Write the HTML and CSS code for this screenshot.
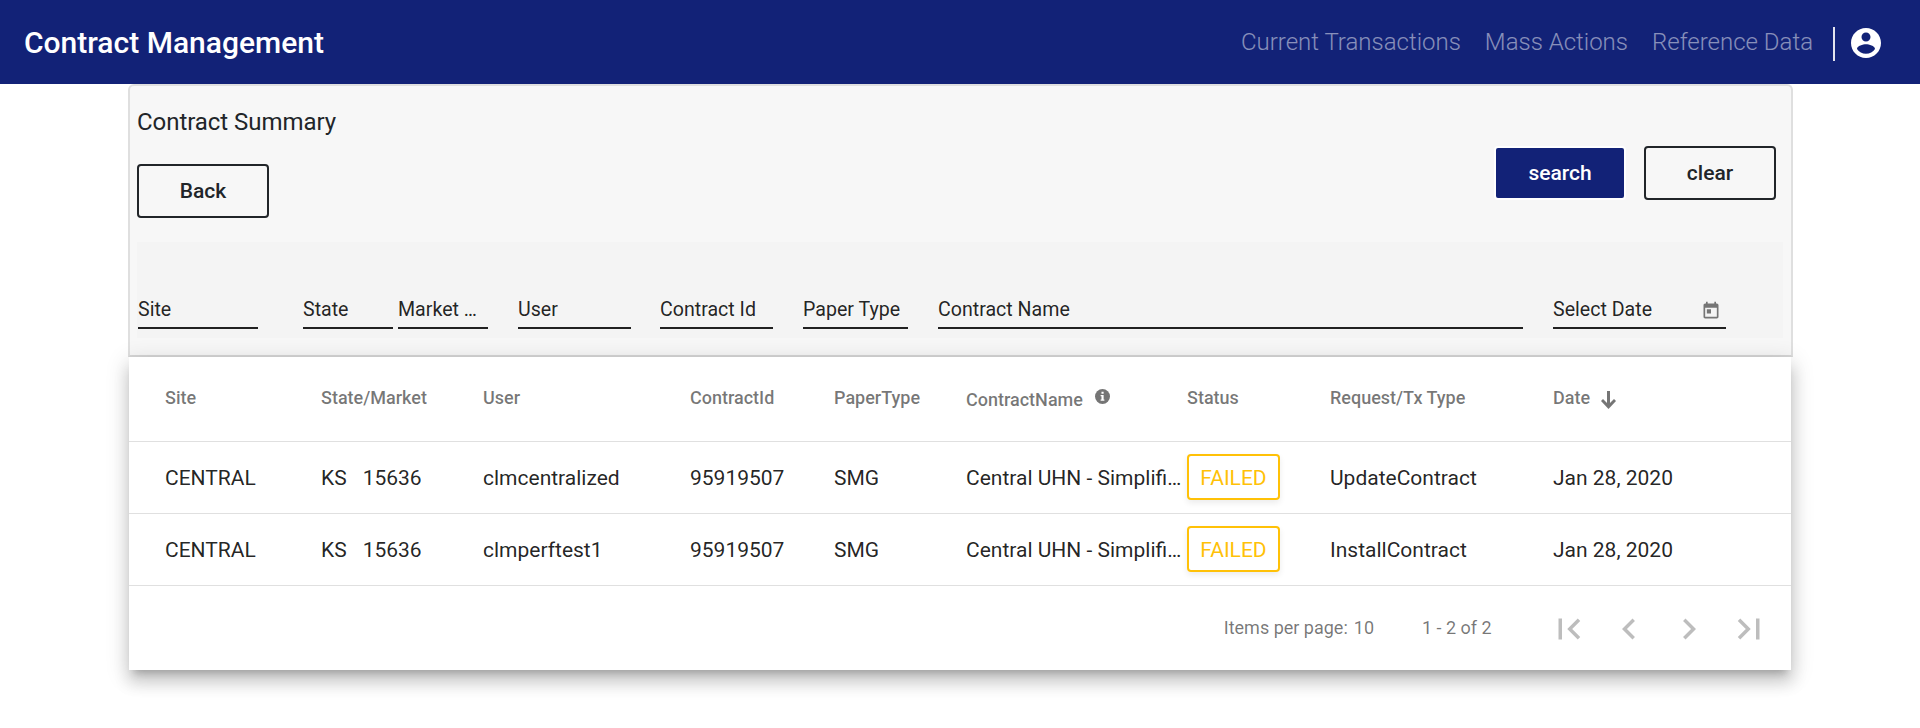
FILE: index.html
```html
<!DOCTYPE html>
<html lang="en">
<head>
<meta charset="utf-8">
<title>Contract Management</title>
<link rel="stylesheet" href="styles.css">
</head>
<body>
<header class="topbar">
  <h1 class="brand">Contract Management</h1>
  <nav class="nav">
    <a class="nav-link">Current Transactions</a>
    <a class="nav-link">Mass Actions</a>
    <a class="nav-link">Reference Data</a>
    <span class="nav-divider"></span>
    <svg class="account" viewBox="0 0 24 24"><path d="M12 2C6.48 2 2 6.48 2 12s4.48 10 10 10 10-4.48 10-10S17.52 2 12 2zm0 3c1.66 0 3 1.34 3 3s-1.34 3-3 3-3-1.34-3-3 1.34-3 3-3zm0 14.2c-2.5 0-4.71-1.28-6-3.22.03-1.99 4-3.08 6-3.08 1.99 0 5.97 1.09 6 3.08-1.29 1.94-3.5 3.22-6 3.22z"/></svg>
  </nav>
</header>
<main class="container">
  <section class="card">
    <div class="card-head">
      <div>
        <h2 class="card-title">Contract Summary</h2>
        <button class="btn btn-outline">Back</button>
      </div>
      <div class="actions">
        <button class="btn btn-primary">search</button>
        <button class="btn btn-outline">clear</button>
      </div>
    </div>
    <div class="filters">
      <div class="field field-site">Site</div>
      <div class="field field-state">State</div>
      <div class="field field-market">Market …</div>
      <div class="field field-user">User</div>
      <div class="field field-id">Contract Id</div>
      <div class="field field-paper">Paper Type</div>
      <div class="field field-name">Contract Name</div>
      <div class="field field-date">Select Date
        <svg class="calendar" viewBox="0 0 24 24"><path d="M19 3h-1V1h-2v2H8V1H6v2H5c-1.11 0-1.99.9-1.99 2L3 19c0 1.1.89 2 2 2h14c1.1 0 2-.9 2-2V5c0-1.1-.9-2-2-2zm0 16H5V8h14v11zM7 10h5v5H7z"/></svg>
      </div>
    </div>
  </section>
  <section class="table">
    <div class="row row-head">
      <span>Site</span><span>State/Market</span><span>User</span><span>ContractId</span><span>PaperType</span>
      <span class="head-name">ContractName <svg class="info" viewBox="0 0 16 16"><circle cx="8" cy="8" r="8"/><path class="info-mark" d="M6.9 3h2.3v2H6.9zM6 6.3h3.2v4.8H10v1.3H6v-1.3h.9V7.6H6z"/></svg></span>
      <span>Status</span><span>Request/Tx Type</span>
      <span class="head-date">Date <svg class="arrow" viewBox="0 0 15 18"><path d="M6 0h3v12l4-4 2 2-7.5 8L0 10l2-2 4 4z"/></svg></span>
    </div>
    <div class="row">
      <span>CENTRAL</span><span class="market"><span>KS</span><span>15636</span></span><span>clmcentralized</span><span>95919507</span><span>SMG</span><span>Central UHN - Simplifi…</span><span class="badge">FAILED</span><span>UpdateContract</span><span>Jan 28, 2020</span>
    </div>
    <div class="row">
      <span>CENTRAL</span><span class="market"><span>KS</span><span>15636</span></span><span>clmperftest1</span><span>95919507</span><span>SMG</span><span>Central UHN - Simplifi…</span><span class="badge">FAILED</span><span>InstallContract</span><span>Jan 28, 2020</span>
    </div>
    <div class="paginator">
      <span class="page-label">Items per page:</span>
      <span class="page-size">10</span>
      <span class="page-range">1 - 2 of 2</span>
      <span class="page-btn"><svg viewBox="0 0 24 24"><path d="M18.41 16.59L13.82 12l4.59-4.59L17 6l-6 6 6 6zM6 6h2v12H6z"/></svg></span>
      <span class="page-btn"><svg viewBox="0 0 24 24"><path d="M15.41 7.41L14 6l-6 6 6 6 1.41-1.41L10.83 12z"/></svg></span>
      <span class="page-btn"><svg viewBox="0 0 24 24"><path d="M10 6L8.59 7.41 13.17 12l-4.58 4.59L10 18l6-6z"/></svg></span>
      <span class="page-btn"><svg viewBox="0 0 24 24"><path d="M5.59 7.41L10.18 12l-4.59 4.59L7 18l6-6-6-6zM16 6h2v12h-2z"/></svg></span>
    </div>
  </section>
</main>
</body>
</html>
```
FILE: styles.css
```css
* { box-sizing: border-box; }
body { margin: 0; min-height: 728px; background: #fff; color: #212529; font-family: Roboto, "Liberation Sans", sans-serif; }
h1, h2 { margin: 0; }
svg { display: block; flex: none; }

.topbar { height: 84px; background: #122277; display: flex; justify-content: space-between; align-items: center; padding: 0 36px 0 24px; }
.brand { font-size: 30px; font-weight: 500; line-height: 36px; color: #fff; margin-top: 2px; }
.nav { display: flex; align-items: center; }
.nav-link { font-size: 24px; font-weight: 300; line-height: 36px; color: rgba(255, 255, 255, .5); margin-right: 24px; white-space: nowrap; }
.nav-divider { width: 2px; height: 34px; margin: 3px 13px 0 -4px; background: #e3e4ee; }
.account { width: 36px; height: 36px; fill: #fff; margin-top: 2px; }

.container { width: 1665px; margin-left: 128px; }
.card { height: 273px; background: #f7f7f7; border: 2px solid #dfdfdf; border-bottom-color: #d6d6d6; border-radius: 6px 6px 0 0; padding: 0 8px 0 7px; }
.card-head { height: 156px; display: flex; justify-content: space-between; }
.card-title { font-size: 24px; font-weight: 400; line-height: 36px; letter-spacing: -.05px; margin: 18px 0 24px; }
.btn { display: block; width: 132px; height: 54px; border-radius: 4px; font: 500 21px/50px Roboto, "Liberation Sans", sans-serif; padding: 0; text-align: center; }
.btn-outline { background: transparent; border: 2px solid #212529; color: #212529; }
.btn-primary { background: #122277; border: 2px solid #fff; color: #fff; }
.actions { display: flex; gap: 18px; margin: 60px 7px 0 0; }

.filters { height: 96px; background: #f4f4f4; padding: 51px 0 0 1px; display: flex; }
.field { height: 36px; border-bottom: 2px solid #212121; color: rgba(0, 0, 0, .87); font-size: 19.6px; line-height: 34px; white-space: nowrap; flex: none; }
.field-site { width: 120px; margin-right: 45px; }
.field-state { width: 90px; margin-right: 5px; }
.field-market { width: 90px; margin-right: 30px; }
.field-user { width: 113px; margin-right: 29px; }
.field-id { width: 113px; margin-right: 30px; }
.field-paper { width: 105px; margin-right: 30px; }
.field-name { width: 585px; margin-right: 30px; }
.field-date { width: 173px; display: flex; justify-content: space-between; padding-right: 5px; }
.calendar { width: 20px; height: 20px; margin-top: 8px; fill: #757575; }

.table { position: relative; width: 1662px; height: 313px; margin-left: 1px; background: #fff;
  box-shadow: 0 7.5px 7.5px -4.5px rgba(0, 0, 0, .2), 0 12px 15px 1.5px rgba(0, 0, 0, .14), 0 4.5px 21px 3px rgba(0, 0, 0, .12); }
.row { height: 72px; padding: 0 0 0 36px; border-bottom: 1px solid #e0e0e0; display: grid; align-items: center;
  grid-template-columns: 156px 162px 207px 144px 132px 221px 143px 223px 1fr; font-size: 21px; color: rgba(0, 0, 0, .87); white-space: nowrap; }
.row-head { height: 85px; padding-bottom: 4px; font-size: 18px; font-weight: 500; color: rgba(0, 0, 0, .54); }
.head-name, .head-date { display: flex; align-items: center; }
.head-name { padding-top: 5px; }
.info { width: 15px; height: 15px; margin: -7px 0 0 12px; fill: #757575; }
.info-mark { fill: #fff; }
.arrow { width: 15px; height: 18px; margin: 4px 0 -2px 11px; fill: #757575; }
.market { display: flex; gap: 16px; }
.badge { width: 93px; height: 46px; margin-bottom: 1px; border: 2px solid #ffc107; border-radius: 4px; color: #ffc107; line-height: 44px; text-align: center; box-shadow: 0 3px 6px rgba(0, 0, 0, .08); }

.paginator { height: 84px; display: flex; align-items: center; justify-content: flex-end; padding: 0 12px 2px 0; font-size: 18px; color: rgba(0, 0, 0, .54); }
.page-size { margin: 0 48px 0 6px; }
.page-range { width: 117px; }
.page-btn { width: 60px; height: 60px; display: flex; align-items: center; justify-content: center; }
.page-btn svg { width: 42px; height: 42px; fill: #bdbdbd; margin-top: 4px; }
```
